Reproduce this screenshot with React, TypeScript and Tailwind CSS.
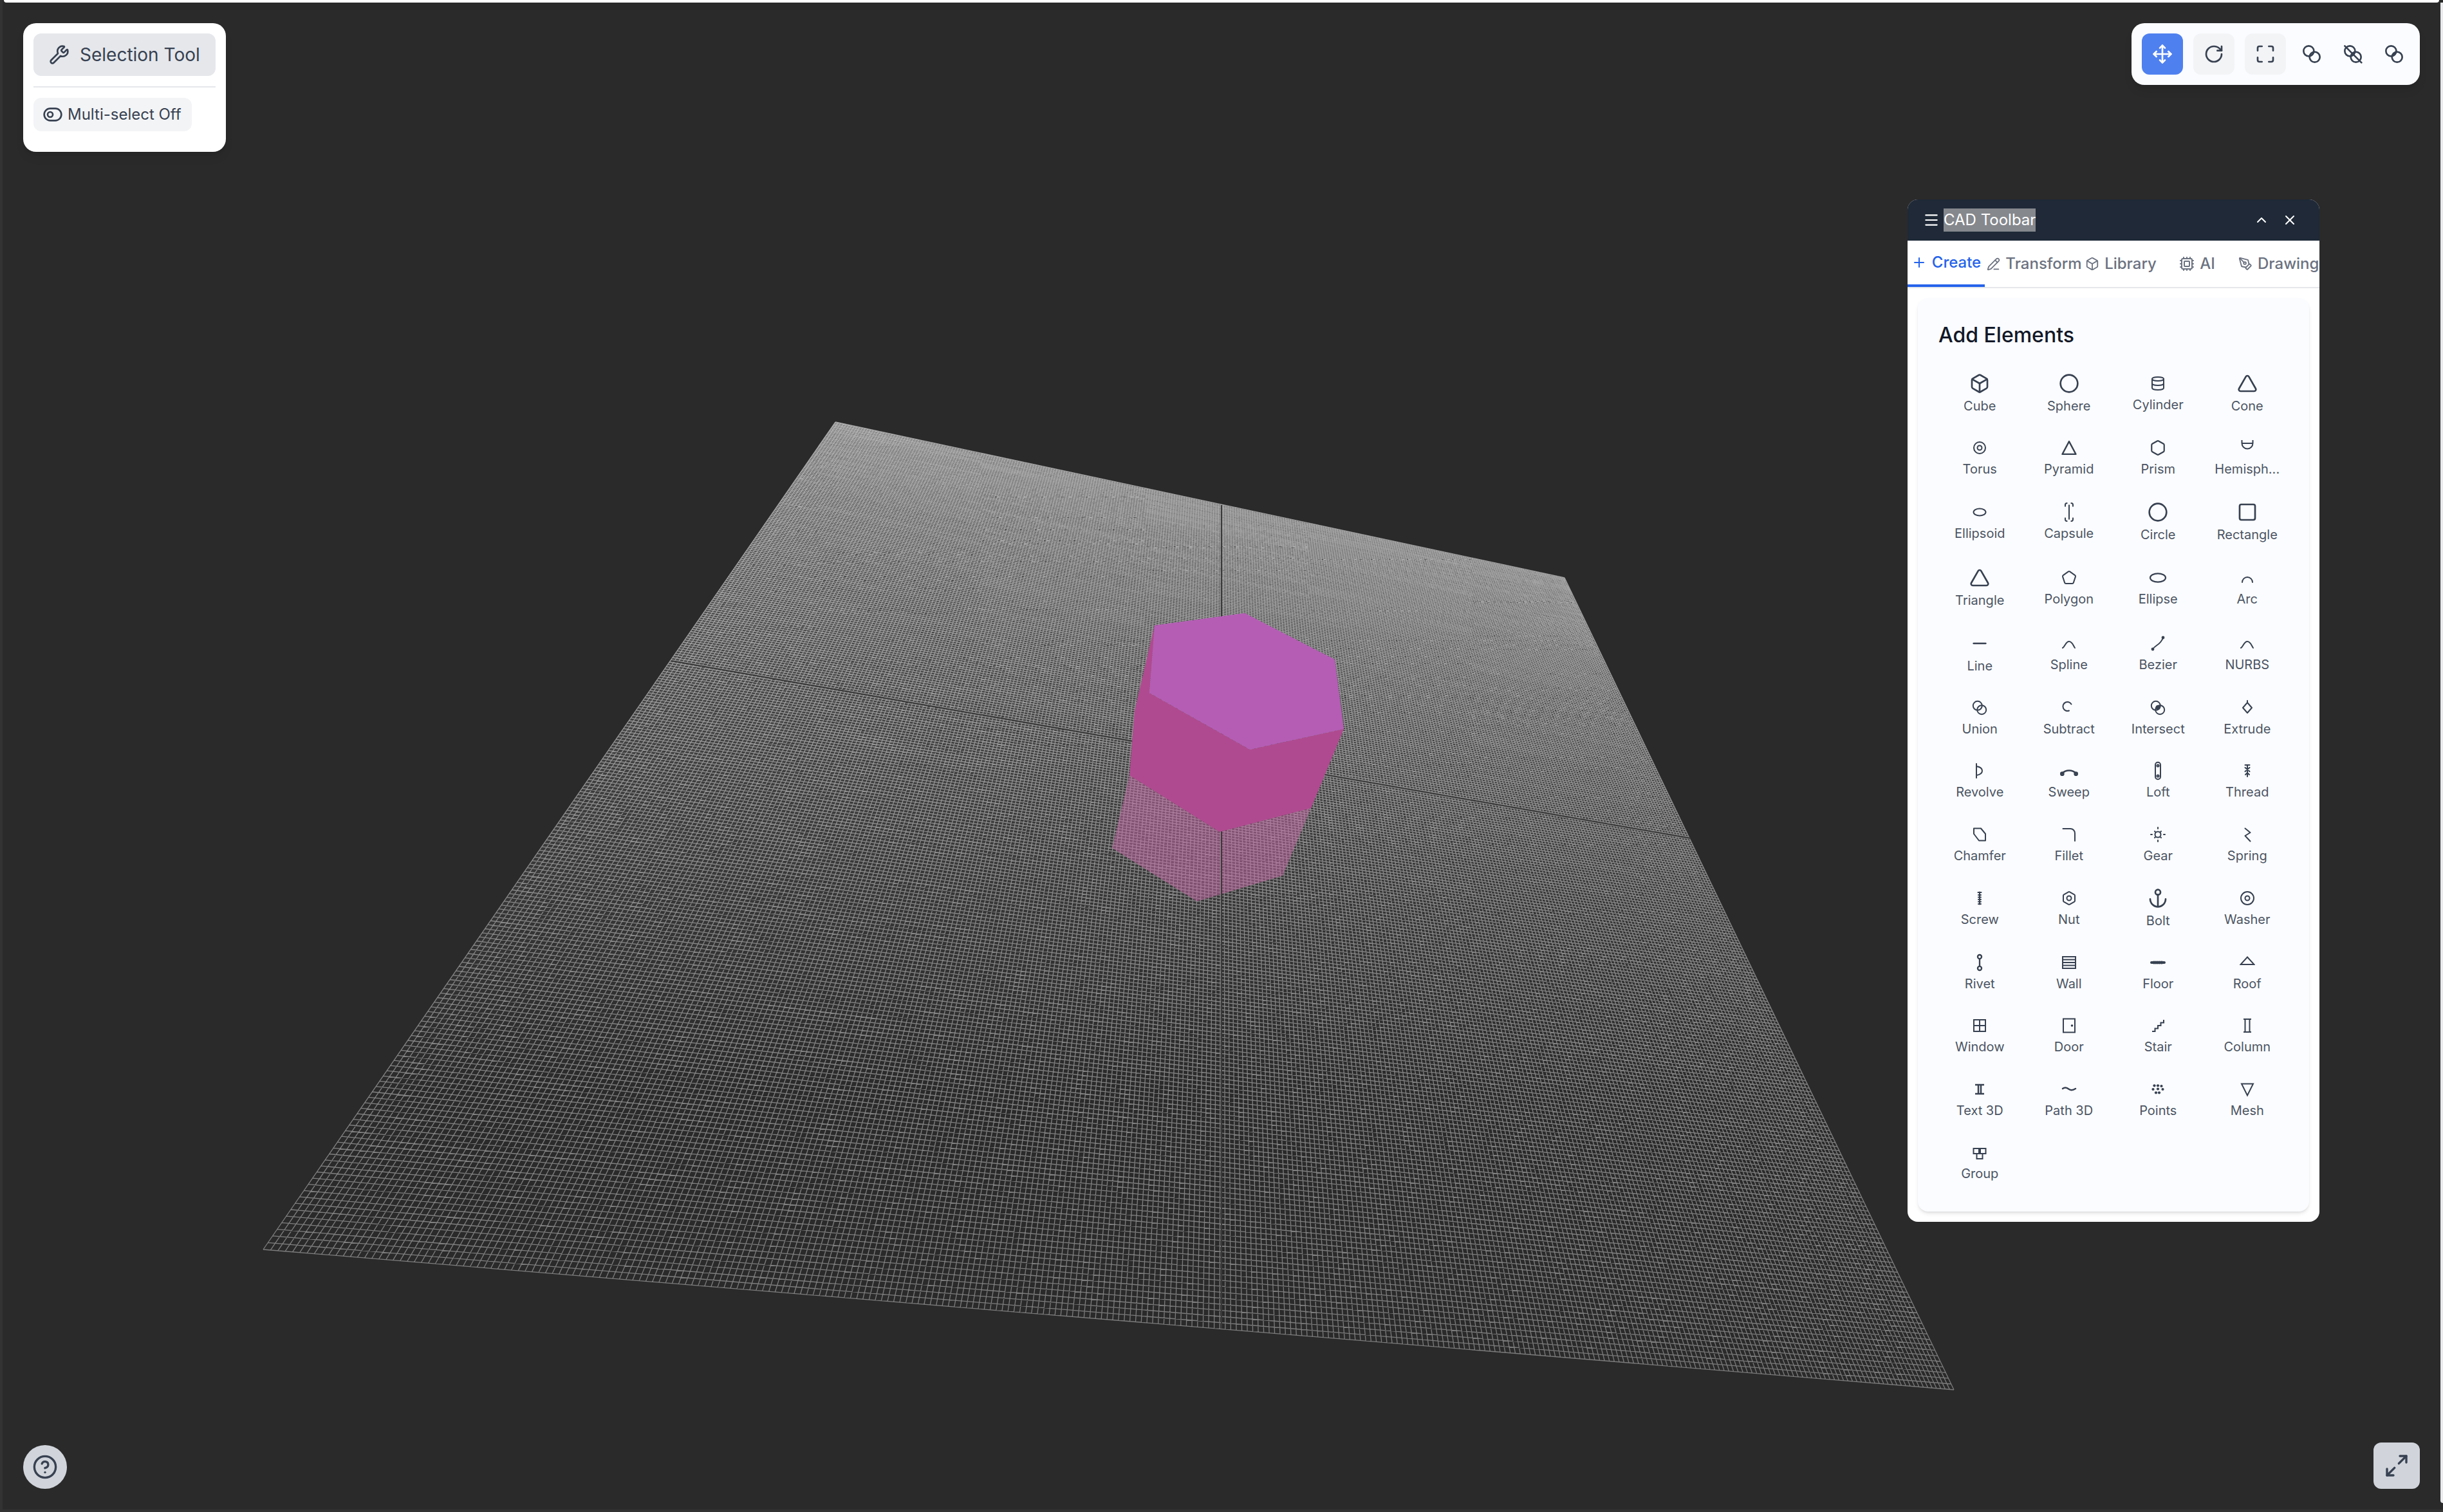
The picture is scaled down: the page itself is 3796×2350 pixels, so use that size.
import { useMemo, type ReactNode } from "react";
import {
  Box,
  ChevronUp,
  Circle,
  CircleHelp,
  Cpu,
  Database,
  Maximize,
  Maximize2,
  Menu,
  Minus,
  Move,
  PencilLine,
  PenTool,
  Pentagon,
  Plus,
  RotateCw,
  Square,
  ToggleLeft,
  Triangle,
  Wrench,
  X,
} from "lucide-react";

const INK = "#374151";

const Ico = ({ children, size = 24 }: { children: ReactNode; size?: number }) => (
  <svg
    width={size}
    height={size}
    viewBox="0 0 24 24"
    fill="none"
    stroke={INK}
    strokeWidth={2}
    strokeLinecap="round"
    strokeLinejoin="round"
  >
    {children}
  </svg>
);

const Dot = ({ x, y, r = 1.6 }: { x: number; y: number; r?: number }) => (
  <circle cx={x} cy={y} r={r} fill={INK} stroke="none" />
);

const hexPath =
  "M21 16V8a2 2 0 0 0-1-1.73l-7-4a2 2 0 0 0-2 0l-7 4A2 2 0 0 0 3 8v8a2 2 0 0 0 1 1.73l7 4a2 2 0 0 0 2 0l7-4A2 2 0 0 0 21 16z";

// gap holds the space between the icon box and its label
type Element = { label: string; icon: ReactNode; gap?: string };

const LOW = "mt-[7px]";

const elements: Element[] = [
  { label: "Cube", gap: LOW, icon: <Box size={32} color={INK} /> },
  { label: "Sphere", gap: LOW, icon: <Circle size={32} color={INK} /> },
  { label: "Cylinder", icon: <Database size={24} color={INK} /> },
  { label: "Cone", gap: LOW, icon: <Triangle size={32} color={INK} /> },
  { label: "Torus", icon: <Ico><circle cx="12" cy="12" r="9" /><circle cx="12" cy="12" r="3.5" /></Ico> },
  { label: "Pyramid", icon: <Ico size={28}><path d="M12 3.5 21 20.5H3z" /></Ico> },
  { label: "Prism", icon: <Ico size={26}><path d={hexPath} /></Ico> },
  { label: "Hemisph...", icon: <Ico><path d="M3.5 0v5h17V0M3.5 5a8.5 8.5 0 0 0 17 0" /></Ico> },
  { label: "Ellipsoid", icon: <Ico><ellipse cx="12" cy="12" rx="9.5" ry="5.5" /></Ico> },
  { label: "Capsule", icon: <Ico size={32}><path d="M7.5 5V3.500a2 2 0 0 1 2-2M14.500 1.500a2 2 0 0 1 2 2V5M7.500 19v1.500a2 2 0 0 0 2 2M14.500 22.500a2 2 0 0 0 2-2V19M12 4v16" strokeWidth={1.5} /></Ico> },
  { label: "Circle", gap: LOW, icon: <Circle size={32} color={INK} /> },
  { label: "Rectangle", gap: LOW, icon: <Square size={32} color={INK} /> },
  { label: "Triangle", gap: LOW, icon: <Triangle size={32} color={INK} /> },
  { label: "Polygon", icon: <Pentagon size={24} color={INK} /> },
  { label: "Ellipse", icon: <Ico size={32}><ellipse cx="12" cy="12" rx="9" ry="5" strokeWidth={1.6} /></Ico> },
  { label: "Arc", icon: <Ico><path d="M4 19a8 8 0 0 1 16 0" /></Ico> },
  { label: "Line", gap: LOW, icon: <Minus size={32} color={INK} /> },
  { label: "Spline", icon: <Ico><path d="M2 19c4-2 4.500-10 10-10 5 0 6 6 9 10" /></Ico> },
  { label: "Bezier", icon: <Ico><path d="M4 21c4-7 12-6 16-18" /><Dot x={4} y={21} r={2.400} /><Dot x={20} y={3} r={2.400} /></Ico> },
  { label: "NURBS", icon: <Ico><path d="M2 19c4-2 4.500-10 10-10 5 0 6 6 9 10" /></Ico> },
  { label: "Union", icon: <Ico><circle cx="8.800" cy="8.800" r="7" /><circle cx="15.200" cy="15.200" r="7" /></Ico> },
  { label: "Subtract", icon: <Ico><path d="M15.500 6.500A7 7 0 1 0 12 16.500" /></Ico> },
  { label: "Intersect", icon: <Ico><circle cx="8.800" cy="8.800" r="7" /><circle cx="15.200" cy="15.200" r="7" /><Dot x={12} y={11.500} r={3.500} /></Ico> },
  { label: "Extrude", icon: <Ico><path d="M12 1v3M12 4l7 8-7 8-7-8z" /></Ico> },
  { label: "Revolve", icon: <Ico><path d="M7 1v22M7 5c6 1 9 4 9 7s-3 6-9 7" /></Ico> },
  { label: "Sweep", icon: <Ico size={32}><path d="M4 15c4-4.500 12-4.500 16 0" /><circle cx="4" cy="15.500" r="1.500" /><circle cx="20" cy="15.500" r="1.500" /></Ico> },
  { label: "Loft", icon: <Ico size={32}><rect x="9" y="2" width="6" height="20" rx="3" strokeWidth={1.500} /><circle cx="12" cy="6" r="1.200" strokeWidth={1.500} /><circle cx="12" cy="18" r="1.200" strokeWidth={1.500} /></Ico> },
  { label: "Thread", icon: <Ico><path d="M12 3v18M8.500 3h7M8.500 7l7 6M15.500 7l-7 6M9 18l3-3 3 3" /></Ico> },
  { label: "Chamfer", icon: <Ico><path d="M3 2.500h11l7 8.500v10.500H11L3 11z" /></Ico> },
  { label: "Fillet", icon: <Ico><path d="M2.500 3H14a7 7 0 0 1 7 7v12" /></Ico> },
  { label: "Gear", icon: <Ico><circle cx="12" cy="12" r="4.500" /><path d="M12 1v2M12 21v2M1 12h2M21 12h2M7 7l.8.8M17 7l-.8.8M7 17l.8-.8M17 17l-.8-.8" /></Ico> },
  { label: "Spring", icon: <Ico><path d="M8.500 2.500 16.500 9 8.500 14l8 8.500" /></Ico> },
  { label: "Screw", icon: <Ico><path d="M12 2.500v19M9.500 3h5M10 7h4M10 10.500h4M10 14h4M10 17.500h4M10 21h4" /></Ico> },
  { label: "Nut", icon: <Ico><path d={hexPath} /><circle cx="12" cy="12" r="3.500" /></Ico> },
  { label: "Bolt", gap: LOW, icon: <Ico size={32}><circle cx="12" cy="5" r="3" /><path d="M12 22V8M3 13a9 9 0 0 0 18 0" /></Ico> },
  { label: "Washer", icon: <Ico><circle cx="12" cy="12" r="10" /><circle cx="12" cy="12" r="3.500" /></Ico> },
  { label: "Rivet", icon: <Ico size={28}><circle cx="12" cy="4.300" r="2.600" /><circle cx="12" cy="19.700" r="2.600" /><path d="M12 7v10" /></Ico> },
  { label: "Wall", icon: <Ico><path d="M2 3h20v18H2zM2 7.500h20M2 12h20M2 16.500h20" strokeLinejoin="miter" strokeLinecap="butt" /></Ico> },
  { label: "Floor", icon: <Ico><path d="M2 12h20" strokeWidth={4} /><path d="M6 9.500v5M9 9.500v5M12 9.500v5M15 9.500v5M18 9.500v5" strokeWidth={1} /></Ico> },
  { label: "Roof", icon: <Ico><path d="M12 3.500 22.500 15h-21z" strokeLinejoin="miter" /></Ico> },
  { label: "Window", icon: <Ico><path d="M3 3h18v18H3zM12 3v18M3 12h18" strokeLinejoin="miter" strokeLinecap="butt" /></Ico> },
  { label: "Door", icon: <Ico><path d="M3 1.500h18v21H3z" strokeLinejoin="miter" /><Dot x={16.500} y={12} r={1.800} /></Ico> },
  { label: "Stair", icon: <Ico><path d="M3 21h4.500v-4.500H12V12h4.500V7.500H21V3" strokeLinecap="butt" strokeLinejoin="miter" /></Ico> },
  { label: "Column", icon: <Ico><path d="M6 2h12M6 22h12M8.500 2v20M15.500 2v20" strokeLinecap="butt" /></Ico> },
  { label: "Text 3D", icon: <Ico><path d="M5 5h14M5 19h14M10 5v14M14 5v14" strokeWidth={2.500} strokeLinecap="butt" /></Ico> },
  { label: "Path 3D", icon: <Ico><path d="M2 11c4-3 7-1 10 1s7 1 10-1" strokeWidth={2.500} /></Ico> },
  { label: "Points", icon: <Ico><Dot x={12} y={6.300} r={2.100} /><Dot x={6.500} y={6.300} r={2.100} /><Dot x={17.500} y={7} r={2.100} /><Dot x={4.500} y={12} r={2.100} /><Dot x={19.500} y={12} r={2.100} /><Dot x={12} y={11.500} r={2.100} /><Dot x={9} y={17.300} r={2.100} /><Dot x={14} y={17.300} r={2.100} /></Ico> },
  { label: "Mesh", icon: <Ico><path d="M3 3.500h18L12 21.500z" strokeLinejoin="miter" /></Ico> },
  { label: "Group", gap: "mt-[3px]", icon: <Ico><path d="M2.500 4H11v8H2.500zM13 4h8.500v8H13zM7.500 12h9v8h-9z" strokeLinejoin="miter" /></Ico> },
];

const tabs = [
  { label: "Transform", icon: <PencilLine size={21} />, width: "w-[154px]" },
  { label: "Library", icon: <Box size={22} />, width: "w-[115px]" },
  { label: "AI", icon: <Cpu size={24} />, width: "w-[122px]" },
];

type Pt = [number, number];

// maps the unit square on to the floor's four corners
const floorMap = (a: Pt, b: Pt, c: Pt, d: Pt) => {
  const dx1 = b[0] - c[0];
  const dx2 = d[0] - c[0];
  const dy1 = b[1] - c[1];
  const dy2 = d[1] - c[1];
  const sx = a[0] - b[0] + c[0] - d[0];
  const sy = a[1] - b[1] + c[1] - d[1];
  const den = dx1 * dy2 - dx2 * dy1;
  const g = (sx * dy2 - dx2 * sy) / den;
  const h = (dx1 * sy - sx * dy1) / den;
  return (u: number, v: number): string => {
    const w = g * u + h * v + 1;
    const x = ((b[0] - a[0] + g * b[0]) * u + (d[0] - a[0] + h * d[0]) * v + a[0]) / w;
    const y = ((b[1] - a[1] + g * b[1]) * u + (d[1] - a[1] + h * d[1]) * v + a[1]) / w;
    return `${x.toFixed(1)} ${y.toFixed(1)}`;
  };
};

const Scene = () => {
  const mesh = useMemo(() => {
    const map = floorMap([1298, 656], [2431, 898], [3036, 2160], [409, 1942]);
    const count = 300;
    let d = "";
    for (let i = 0; i <= count; i++) {
      const t = i / count;
      d += `M${map(t, 0)}L${map(t, 1)}M${map(0, t)}L${map(1, t)}`;
    }
    return d;
  }, []);

  return (
    <svg className="absolute inset-0" width="3796" height="2350" viewBox="0 0 3796 2350">
      <defs>
        <linearGradient id="floorFade" gradientUnits="userSpaceOnUse" x1="0" y1="656" x2="0" y2="2160">
          <stop offset="0" stopColor="#b0b0b0" />
          <stop offset="0.5" stopColor="#888888" />
          <stop offset="1" stopColor="#7a7a7a" />
        </linearGradient>
        <linearGradient id="floorGlow" gradientUnits="userSpaceOnUse" x1="0" y1="656" x2="0" y2="1700">
          <stop offset="0" stopColor="#ffffff" stopOpacity="0.2" />
          <stop offset="1" stopColor="#ffffff" stopOpacity="0" />
        </linearGradient>
      </defs>
      <polygon points="1298,656 2431,898 3036,2160 409,1942" fill="url(#floorGlow)" />
      <path d={mesh} fill="none" stroke="url(#floorFade)" strokeWidth="1.3" />
      <path d="M1043 1027 2627 1303" stroke="#3a3a3a" strokeWidth="2" fill="none" />
      <polygon
        points="1755,1205 1728,1318 1860,1401 1993,1361 2037,1256 1895,1293"
        fill="#c86aa8"
        fillOpacity="0.5"
      />
      <path d="M1898 785V2065" stroke="#3a3a3a" strokeWidth="2" fill="none" />
      <polygon
        points="1794,972 1763,1105 1755,1205 1895,1293 2037,1256 2088,1133 1942,1165 1786,1077"
        fill="#b04a90"
      />
      <polygon points="1794,972 1934,953 2074,1025 2088,1133 1942,1165 1786,1077" fill="#b55db5" />
    </svg>
  );
};

const Elements = () => (
  <div className="grid grid-cols-4 gap-x-[10px] grid-rows-[100px_100px_102px_102px_100px_98px_99px_99px_100px_98px_99px_100px_92px]">
    {elements.map((el) => (
      <div key={el.label} className="flex flex-col items-center pt-[18px]">
        <div className="flex h-[32px] items-center justify-center">{el.icon}</div>
        <span className={`text-[20px] leading-[24px] text-[#4b5563] ${el.gap ?? "mt-[5px]"}`}>
          {el.label}
        </span>
      </div>
    ))}
  </div>
);

const CadToolbar = () => (
  <div className="absolute left-[2964px] top-[310px] w-[640px] overflow-hidden rounded-2xl bg-white">
    <div className="flex h-[64px] items-center justify-between bg-[#1f2937] pl-6 pr-[34px] text-white">
      <div className="flex items-center gap-[6px]">
        <Menu size={26} />
        <span className="bg-[#85888d] text-[24px] leading-[36px]">CAD Toolbar</span>
      </div>
      <div className="flex items-center gap-5">
        <ChevronUp size={24} />
        <X size={24} />
      </div>
    </div>

    <div className="flex h-[74px] overflow-hidden border-b-2 border-[#e5e7eb] text-[24px] font-medium text-[#6b7280]">
      <div className="flex w-[120px] flex-none items-center justify-center gap-2 border-b-[4px] border-[#2563eb] text-[#2563eb]">
        <Plus size={24} />
        <span>Create</span>
      </div>
      {tabs.map((tab) => (
        <div key={tab.label} className={`flex flex-none items-center justify-center gap-2 ${tab.width}`}>
          {tab.icon}
          <span>{tab.label}</span>
        </div>
      ))}
      <div className="flex flex-none items-center gap-2 pl-[3px]">
        <PenTool size={22} />
        <span>Drawing</span>
      </div>
    </div>

    <div className="px-4 pb-4 pt-[15px]">
      <div className="rounded-2xl bg-[#fbfcff] px-8 pb-8 pt-[34px] shadow-md">
        <h3 className="mb-[17px] text-[32px] font-medium leading-[48px] text-[#111827]">Add Elements</h3>
        <Elements />
      </div>
    </div>
  </div>
);

const SelectionPanel = () => (
  <div className="absolute left-[36px] top-[36px] w-[315px] rounded-[20px] bg-white p-4 pb-8 shadow-lg">
    <button className="flex h-[66px] w-full items-center gap-4 rounded-xl bg-[#e5e7eb] px-6 text-[28px] text-[#374151]">
      <Wrench size={32} />
      <span>Selection Tool</span>
    </button>
    <div className="my-4 h-[2px] bg-[#e5e7eb]" />
    <button className="flex h-[52px] items-center gap-[7px] rounded-xl bg-[#f3f4f6] pl-[14px] pr-4 text-[24px] text-[#374151]">
      <ToggleLeft size={32} />
      <span>Multi-select Off</span>
    </button>
  </div>
);

const ViewControls = () => (
  <div className="absolute right-[36px] top-[36px] flex gap-4 rounded-[20px] bg-[#fbfcff] p-4 text-[#374151] shadow-lg">
    <div className="flex h-[64px] w-[64px] items-center justify-center rounded-xl bg-[#4f80f0] text-white">
      <Move size={32} />
    </div>
    <div className="flex h-[64px] w-[64px] items-center justify-center rounded-xl bg-[#f3f4f6]">
      <RotateCw size={32} />
    </div>
    <div className="flex h-[64px] w-[64px] items-center justify-center rounded-xl bg-[#f3f4f6]">
      <Maximize size={32} />
    </div>
    <div className="flex h-[64px] w-[48px] items-center justify-center">
      <Ico size={32}><circle cx="8.500" cy="8.500" r="6" /><circle cx="15.500" cy="15.500" r="6" /></Ico>
    </div>
    <div className="flex h-[64px] w-[48px] items-center justify-center">
      <Ico size={32}><circle cx="8.500" cy="8.500" r="6" /><circle cx="15.500" cy="15.500" r="6" /><path d="M2.500 2.500 22 22" /></Ico>
    </div>
    <div className="flex h-[64px] w-[48px] items-center justify-center">
      <Ico size={32}><circle cx="8.500" cy="8.500" r="6" /><circle cx="15.500" cy="15.500" r="6" /><path d="M11 13.500c2-1 3-2.500 3.500-5" /></Ico>
    </div>
  </div>
);

export default function App() {
  return (
    <div className="relative h-[2350px] w-[3796px] overflow-hidden bg-[#2a2a2a] font-[Inter,sans-serif]">
      <Scene />
      <div className="absolute bottom-0 left-0 top-0 w-[4px] bg-[#333333]" />
      <div className="absolute bottom-0 left-0 right-0 h-[4px] bg-[#333333]" />
      <div className="absolute left-[6px] right-[6px] top-0 h-[4px] rounded-b-xl bg-white" />
      <div className="absolute bottom-[14px] right-0 top-[4px] w-[4px] rounded-bl-xl bg-[#e8eaee]" />
      <SelectionPanel />
      <ViewControls />
      <CadToolbar />
      <button className="absolute bottom-[36px] left-[36px] flex h-[68px] w-[68px] items-center justify-center rounded-full bg-[#d1d5db] text-[#374151]">
        <CircleHelp size={40} />
      </button>
      <button className="absolute bottom-[36px] right-[36px] flex h-[72px] w-[72px] items-center justify-center rounded-xl bg-[#d1d5db] text-[#374151]">
        <Maximize2 size={40} />
      </button>
    </div>
  );
}
